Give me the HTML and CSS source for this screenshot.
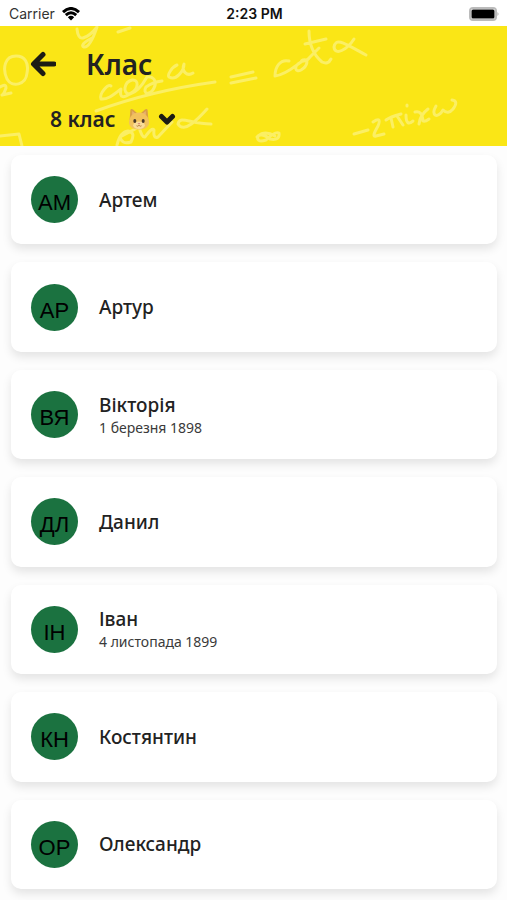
FILE: index.html
```html
<!DOCTYPE html>
<html lang="uk">
<head>
<meta charset="utf-8">
<meta name="viewport" content="width=device-width, initial-scale=1">
<title>Клас</title>
<link rel="stylesheet" href="styles.css">
</head>
<body>
<div class="status">
  <div class="carrier">
    <span>Carrier</span>
    <svg class="wifi" viewBox="0 0 18 14" aria-hidden="true">
      <path d="M1 5.2Q9-2.2 17 5.2" />
      <path d="M3.8 8.1Q9 3.4 14.2 8.1" />
      <path class="solid" d="M5.8 10.2Q9 7.4 12.2 10.2L9 13.6Z" />
    </svg>
  </div>
  <time class="clock">2:23 PM</time>
  <svg class="battery" viewBox="0 0 31 14" aria-hidden="true">
    <rect class="shell" x="1" y="1" width="26" height="12" rx="3" />
    <rect x="2.5" y="2.5" width="23" height="9" rx="1.5" />
    <path class="tip" d="M28.5 5Q30.5 7 28.5 9Z" />
  </svg>
</div>
<header class="header">
  <svg class="doodles" viewBox="0 26 507 120" aria-hidden="true">
    <path d="M77 29Q78 39 83 38Q90 36 97 27Q90 48 84 47Q79 45 92 38M118 32L130 28" />
    <path d="M16 56C5 56 2 68 7 79C12 88 26 85 27 73C29 63 25 56 16 56ZM0 87Q6 83 6 88Q4 94 2 95L11 93" />
    <path d="M111 86C108 84 99 93 101 99C108 100 114 94 121 89C119 99 124 98 131 93C139 89 139 79 132 80C124 82 122 94 130 94C138 92 143 84 147 77C152 76 158 80 154 88C150 96 142 94 146 87Q153 82 162 81M177 65C172 67 167 75 169 77C176 81 184 71 184 64C181 71 187 77 193 73" />
    <path class="bar" d="M96 111Q150 91 215 82" />
    <path d="M231 77L253 72M231 83L256 78" />
    <path d="M289 61C280 59 275 67 275 76C285 75 294 67 301 62C293 66 295 73 301 70C308 66 309 58 303 60C298 62 307 62 310 57L319 48M309 31Q309 51 322 62Q328 65 331 59M305 44L326 39M354 39C347 50 335 56 334 47C336 37 344 43 366 55" />
    <path d="M117 145Q120 132 128 131Q136 132 131 142Q122 145 120 137L139 127Q142 138 145 137Q152 127 154 130Q153 139 158 137L172 122M207 109C198 119 184 134 178 124C180 115 190 124 211 124" />
    <path d="M275 136Q265 130 258 136Q256 143 266 140Q275 131 279 133Q280 141 270 139Q261 132 257 137" />
    <path d="M354 134L368 130M373 122Q382 116 378 126Q371 138 376 136L384 134M386 120Q390 117 401 114M391 118L393 127M397 116L403 125M406 115Q406 127 413 121M407 105V106M415 112Q422 110 423 121Q425 122 429 119M428 109Q420 115 419 124M436 106C430 116 438 119 443 110Q448 115 453 109Q459 101 452 100" />
    <path d="M0 136L19 134L22 146" />
  </svg>
  <div class="topbar">
    <button class="back" type="button" aria-label="Назад">
      <svg viewBox="0 0 26 26" aria-hidden="true"><path d="M13 3.5L3.5 13L13 22.5M4 13H24" /></svg>
    </button>
    <h1 class="title">Клас</h1>
  </div>
  <div class="picker">
    <select class="picker-select" aria-label="Оберіть клас"><option>8 клас</option></select>
    <span class="picker-icons">
      <svg class="cat" viewBox="0 0 22 22" aria-hidden="true">
        <path class="ear" d="M1.6 12L2.4 2Q3 0 5 1.6L9 5H13L17 1.6Q19 0 19.6 2L20.4 12Z" />
        <path class="inner" d="M4 7L4.3 3L8 6ZM18 7L17.7 3L14 6Z" />
        <path class="face" d="M11 4.6C17 4.6 20.5 8.5 21 14C21.2 19 17 21.6 11 21.6C5 21.6 0.8 19 1 14C1.5 8.5 5 4.6 11 4.6Z" />
        <ellipse class="muzzle" cx="11" cy="17.2" rx="5.8" ry="3.8" />
        <ellipse cx="6.8" cy="13" rx="1.5" ry="2.1" />
        <ellipse cx="15.2" cy="13" rx="1.5" ry="2.1" />
        <path class="nose" d="M9.5 15H12.5L11 16.8Z" />
        <path class="mouth" d="M8.5 17.8Q10 19 11 17.2Q12 19 13.5 17.8" />
      </svg>
      <svg class="chevron" viewBox="0 0 18 12" aria-hidden="true"><path d="M3.5 3.5L9 9L14.5 3.5" /></svg>
    </span>
  </div>
</header>
<main class="main">
  <ul class="list">
    <li class="card"><span class="avatar">АМ</span><div class="info"><p class="name">Артем</p></div></li>
    <li class="card"><span class="avatar">АР</span><div class="info"><p class="name">Артур</p></div></li>
    <li class="card"><span class="avatar">ВЯ</span><div class="info"><p class="name">Вікторія</p><p class="date">1 березня 1898</p></div></li>
    <li class="card"><span class="avatar">ДЛ</span><div class="info"><p class="name">Данил</p></div></li>
    <li class="card"><span class="avatar">ІН</span><div class="info"><p class="name">Іван</p><p class="date">4 листопада 1899</p></div></li>
    <li class="card"><span class="avatar">КН</span><div class="info"><p class="name">Костянтин</p></div></li>
    <li class="card"><span class="avatar">ОР</span><div class="info"><p class="name">Олександр</p></div></li>
  </ul>
</main>
</body>
</html>
```
FILE: styles.css
```css
* { box-sizing: border-box; }

body {
  margin: 0;
  min-height: 100vh;
  display: flex;
  flex-direction: column;
  background: #fdfdfd;
  color: #222;
  font-family: "Noto Sans", "Open Sans", sans-serif;
}

.status {
  display: grid;
  grid-template-columns: 1fr auto 1fr;
  align-items: center;
  height: 26px;
  padding: 1px 7px 0 9px;
  background: #fff;
  font: 14px/20px Inter, "Liberation Sans", sans-serif;
}
.carrier { display: flex; align-items: center; gap: 7px; color: #333; }
.wifi { width: 18px; height: 14px; fill: none; stroke: #000; stroke-width: 3; }
.wifi .solid { fill: #000; stroke: none; }
.clock { font-weight: 600; color: #111; }
.battery { width: 31px; height: 14px; justify-self: end; }
.battery .shell { fill: #fff; stroke: #bbb; stroke-width: 2; }
.battery .tip { fill: #aaa; }

.header {
  position: relative;
  overflow: hidden;
  height: 120px;
  padding: 20px 30px 0;
  background: #fae616;
}
.doodles {
  position: absolute;
  top: 0;
  left: 0;
  width: 507px;
  height: 120px;
  fill: none;
  stroke: #fbef64;
  stroke-width: 3;
  stroke-linecap: round;
  stroke-linejoin: round;
}
.topbar { position: relative; display: flex; align-items: center; gap: 30px; height: 36px; }
.back { width: 26px; height: 26px; padding: 0; border: 0; background: none; }
.back svg { display: block; width: 26px; height: 26px; fill: none; stroke: #1c1c14; stroke-width: 5; stroke-linecap: round; stroke-linejoin: round; }
.title { margin: 0; font-size: 28px; line-height: 34px; font-weight: 600; }

.picker { position: relative; width: max-content; margin: 22px 0 0 20px; height: 30px; }
.picker-select {
  appearance: none;
  height: 30px;
  padding: 0 60px 0 0;
  border: 0;
  background: none;
  color: inherit;
  font: 600 21px/30px "Noto Sans", "Open Sans", sans-serif;
}
.picker-icons {
  position: absolute;
  inset: 0 0 0 auto;
  display: flex;
  align-items: center;
  gap: 8px;
  pointer-events: none;
}
.cat { width: 22px; height: 22px; fill: #4a3828; }
.cat .ear { fill: #d99f48; }
.cat .inner { fill: #e8b070; }
.cat .face { fill: #f2c25c; }
.cat .muzzle { fill: #f9dc98; }
.cat .nose { fill: #d98877; }
.cat .mouth { fill: none; stroke: #b98342; stroke-width: 1; }
.chevron { width: 18px; height: 12px; fill: none; stroke: #1c1c14; stroke-width: 5; stroke-linecap: round; stroke-linejoin: round; }

.main { flex: 1; display: flex; padding: 9px 10px 11px 11px; }
.list {
  flex: 1;
  display: grid;
  grid-auto-rows: 1fr;
  gap: 18px;
  margin: 0;
  padding: 0;
  list-style: none;
}
.card {
  display: flex;
  align-items: center;
  gap: 21px;
  padding: 0 20px;
  min-height: 80px;
  border-radius: 10px;
  background: #fff;
  box-shadow: 0 5px 10px rgba(0, 0, 0, 0.1);
}
.avatar {
  flex: none;
  width: 47px;
  height: 47px;
  padding-top: 3px;
  border-radius: 50%;
  background: #1b7240;
  color: #000;
  font: 22px/47px "Liberation Sans", sans-serif;
  text-align: center;
}
.name, .date { margin: 0; }
.name { font-size: 19px; line-height: 26px; font-weight: 500; }
.date { font-size: 14px; line-height: 20px; color: #3a3a3a; }
```
